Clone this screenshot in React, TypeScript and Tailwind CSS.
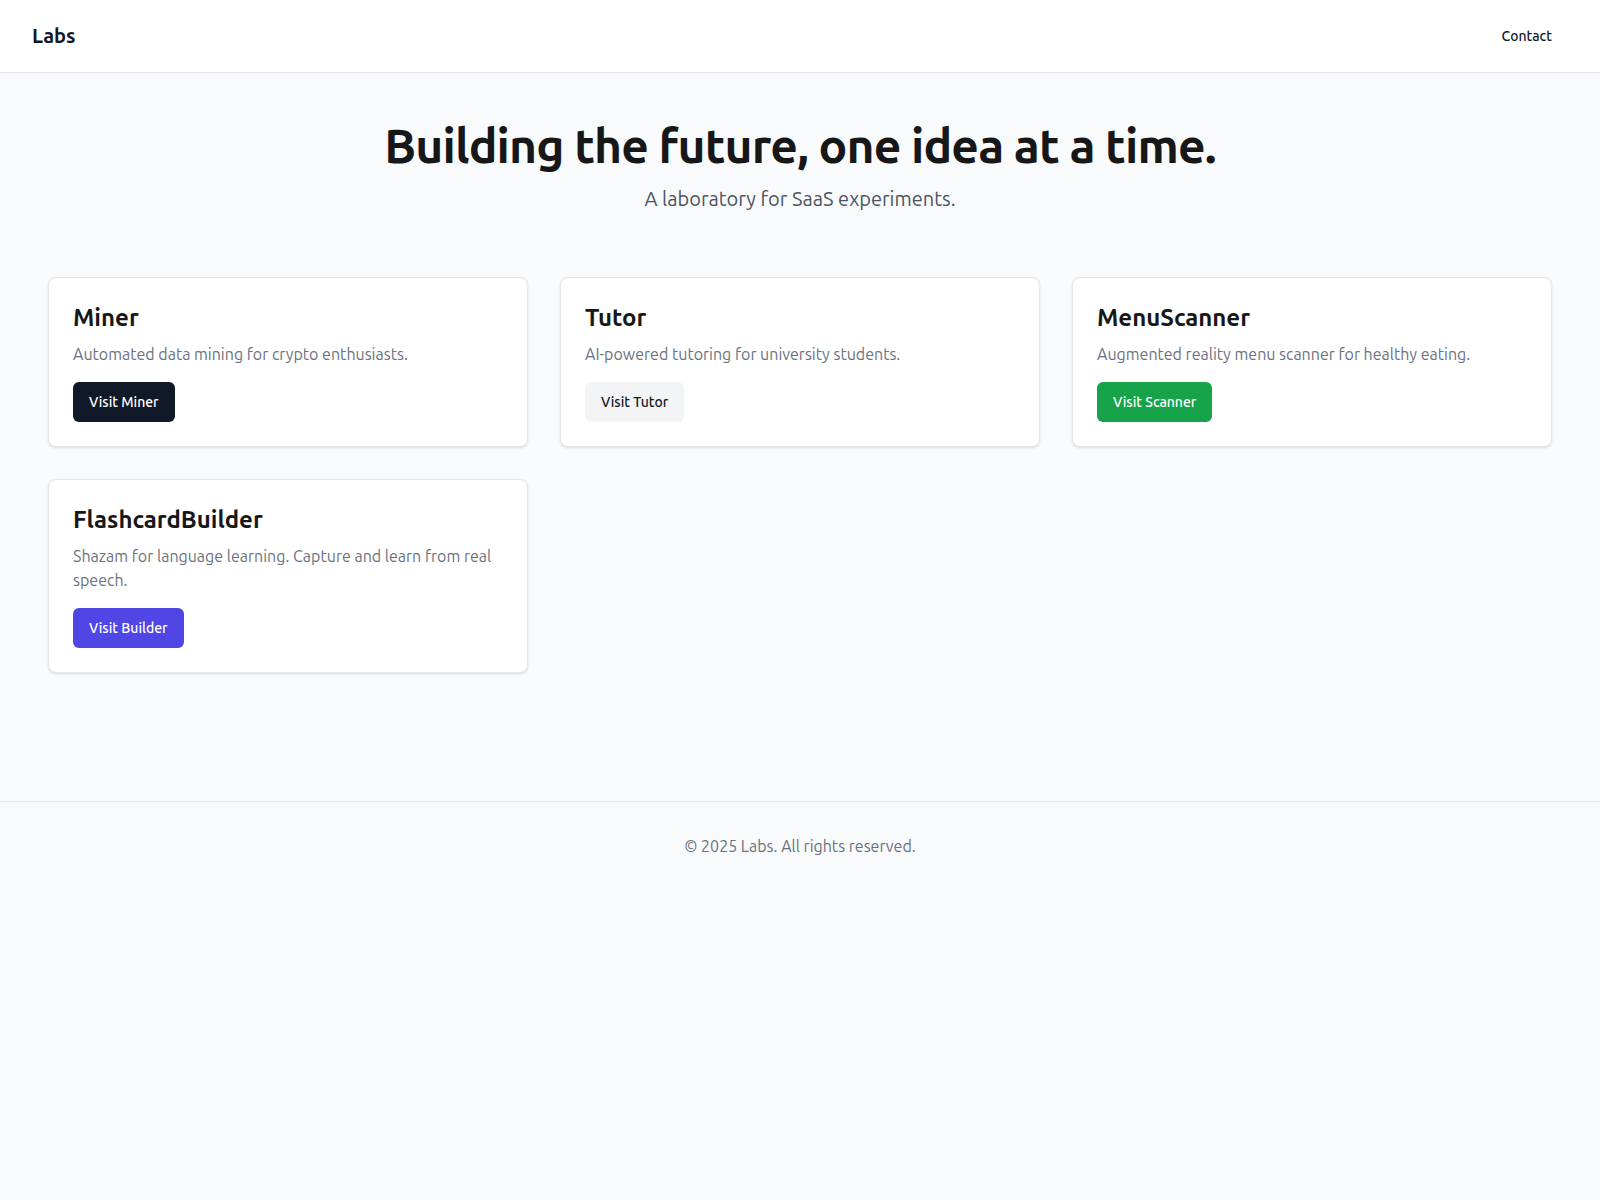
import React from "react";

const cards = [
  { title: "Miner", desc: "Automated data mining for crypto enthusiasts.", btn: "Visit Miner", cls: "bg-[#111827] text-white" },
  { title: "Tutor", desc: "AI-powered tutoring for university students.", btn: "Visit Tutor", cls: "bg-[#f3f4f6] text-[#111827]" },
  { title: "MenuScanner", desc: "Augmented reality menu scanner for healthy eating.", btn: "Visit Scanner", cls: "bg-[#16a34a] text-white" },
  { title: "FlashcardBuilder", desc: "Shazam for language learning. Capture and learn from real speech.", btn: "Visit Builder", cls: "bg-[#4f46e5] text-white" },
];

export default function App() {
  return (
    <div className="min-h-screen bg-[#f9fafb] text-[#111827] font-['Ubuntu','Noto_Sans',sans-serif]">
      <header className="bg-white border-b border-[#e5e7eb]">
        <div className="flex items-center justify-between h-[72px] px-8">
          <span className="text-xl font-bold">Labs</span>
          <a className="px-4 py-2 text-sm font-medium">Contact</a>
        </div>
      </header>
      <main className="px-12 pt-12 pb-32">
        <div className="text-center">
          <h1 className="text-5xl font-bold tracking-[-0.018em] text-[#171717]">Building the future, one idea at a time.</h1>
          <p className="mt-4 text-xl text-[#4b5563]">A laboratory for SaaS experiments.</p>
        </div>
        <div className="mt-16 grid grid-cols-3 gap-8">
          {cards.map((c) => (
            <div key={c.title} className="bg-white border border-[#e5e7eb] rounded-lg p-6 shadow-sm">
              <h2 className="text-2xl font-semibold text-[#171717]">{c.title}</h2>
              <p className="mt-2 text-base text-[#6b7280]">{c.desc}</p>
              <button className={`mt-4 h-10 px-4 rounded-md text-sm font-medium ${c.cls}`}>{c.btn}</button>
            </div>
          ))}
        </div>
      </main>
      <footer className="border-t border-[#e5e7eb] py-8 text-center text-base text-[#6b7280]">
        © 2025 Labs. All rights reserved.
      </footer>
    </div>
  );
}
